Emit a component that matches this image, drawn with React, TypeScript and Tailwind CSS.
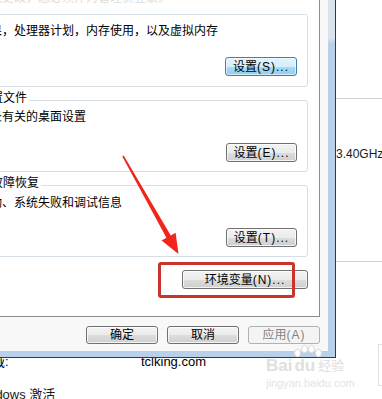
import React from 'react';

const normalBtn =
  'border-[#707070] bg-[linear-gradient(180deg,#f3f3f3_0%,#ebebeb_50%,#dddddd_51%,#cfcfcf_100%)] shadow-[inset_0_0_0_1px_rgba(255,255,255,0.75)] text-black';
const focusBtn =
  'border-[#3c7fb1] bg-[linear-gradient(180deg,#e3f4fc_0%,#d4eefb_50%,#a9dbf6_51%,#90cef0_100%)] shadow-[inset_0_0_0_1px_rgba(255,255,255,0.6)] text-black';
const disabledBtn = 'border-[#adb2b5] bg-[#f4f4f4] text-[#838383]';

function Button({ label, hotkey, className }: { label: string; hotkey: string; className: string }) {
  return (
    <div
      className={`flex shrink-0 items-center justify-center rounded-[3px] border text-[12px] leading-none ${className}`}
    >
      <span>{label}</span>
      <span className="tracking-[1px]">{hotkey}</span>
    </div>
  );
}

function Group({
  title,
  text,
  children,
  className,
  textClass,
}: {
  title: string;
  text: string;
  children: React.ReactNode;
  className: string;
  textClass: string;
}) {
  return (
    <div
      className={`-ml-[60px] flex w-[368px] shrink-0 flex-col rounded-[3px] border border-[#d5dfe5] ${className}`}
    >
      <div className="-mt-[10px] ml-[12px] w-fit bg-white px-[2px] text-[12px] leading-[14px] text-black">
        {title}
      </div>
      <div className={`pl-[13px] text-[12px] leading-[16px] whitespace-nowrap text-black ${textClass}`}>{text}</div>
      <div className="mt-[18px] flex justify-end pr-[10px]">{children}</div>
    </div>
  );
}

export default function App() {
  return (
    <div className="relative h-[399px] w-[382px] overflow-hidden bg-white font-['Liberation_Sans','Noto_Sans_CJK_SC',sans-serif]">
      {/* system page behind the dialog */}
      <div className="flex flex-col">
        <div className="ml-[336px] pt-[98px]">
          <div className="h-[163px] border-t border-[#d4d4d4] pt-[48px] text-[12px] leading-[14px] whitespace-nowrap text-[#1a1a1a]">
            3.40GHz
          </div>
          <div className="h-[93px] border-t border-[#d4d4d4]" />
        </div>
        <div className="flex h-[15px] text-[13px] leading-[15px] whitespace-nowrap text-black">
          <span className="-ml-[8px] w-[149px]">域:</span>
          <span>tclking.com</span>
        </div>
        <div className="mt-[18px] -ml-[27px] text-[13px] leading-[15px] whitespace-nowrap text-[#1a1a1a]">
          Windows 激活
        </div>
      </div>

      {/* dialog window */}
      <div className="absolute left-0 top-0 h-[358px] w-[336px] border-r border-b border-[#2d3a48] bg-[linear-gradient(180deg,#d9e3ec_0px,#d9e3ec_38px,#b8d0e9_44px,#b8d0e9_100%)]">
        <div className="flex h-[351px] w-[328px] flex-col bg-[#f8f8f8]">
          <div className="flex h-[317px] w-[320px] shrink-0 flex-col border-r border-b border-[#898c95] bg-white">
            <div className="h-[14px] shrink-0 overflow-hidden">
              <div className="-mt-[8px] -ml-[70px] text-[12px] leading-[12px] whitespace-nowrap text-[#dddddd]">
                要进行大多数更改，您必须作为管理员登录。
              </div>
            </div>

            <Group
              title="性能"
              text="视觉效果，处理器计划，内存使用，以及虚拟内存"
              className="h-[73px]"
              textClass="mt-[4px]"
            >
              <Button label="设置" hotkey="(S)..." className={`h-[19px] w-[72px] ${focusBtn}`} />
            </Group>

            <Group
              title="用户配置文件"
              text="与您登录有关的桌面设置"
              className="mt-[13px] h-[72px]"
              textClass="mt-[4px]"
            >
              <Button label="设置" hotkey="(E)..." className={`h-[19px] w-[71px] ${normalBtn}`} />
            </Group>

            <Group
              title="启动和故障恢复"
              text="系统启动、系统失败和调试信息"
              className="mt-[13px] h-[72px]"
              textClass="mt-[5px]"
            >
              <Button label="设置" hotkey="(T)..." className={`-mt-[1px] h-[19px] w-[71px] ${normalBtn}`} />
            </Group>

            <div className="mt-[13px] flex justify-end pr-[11px]">
              <Button label="环境变量" hotkey="(N)..." className={`h-[19px] w-[126px] ${normalBtn}`} />
            </div>
          </div>

          <div className="mt-[9px] flex justify-end gap-[9px] pr-[8px]">
            <Button label="确定" hotkey="" className={`h-[18px] w-[72px] ${normalBtn}`} />
            <Button label="取消" hotkey="" className={`h-[18px] w-[72px] ${normalBtn}`} />
            <Button label="应用" hotkey="(A)" className={`h-[18px] w-[72px] ${disabledBtn}`} />
          </div>
        </div>
      </div>

      {/* red highlight box */}
      <div className="pointer-events-none absolute left-[158px] top-[262px] h-[36px] w-[137px] rounded-[3px] border-[3px] border-[#c9342d]" />

      {/* red arrow */}
      <svg
        className="pointer-events-none absolute left-0 top-0"
        width="382"
        height="399"
        viewBox="0 0 382 399"
      >
        <polygon
          points="123.7,155.6 170.8,235.4 175.6,232.7 178.5,254 161.6,240.5 166.4,237.8 122.3,156.4"
          fill="#f0261c"
        />
      </svg>

      {/* baidu watermark */}
      <div className="pointer-events-none absolute left-[266px] top-[344px] w-[92px] text-[#e0e0e0]">
        <svg className="ml-[28px]" width="28" height="14" viewBox="0 0 28 14">
          <ellipse cx="3.5" cy="9" rx="3" ry="3.8" fill="#ffffff" stroke="#dadada" />
          <ellipse cx="10.5" cy="5" rx="3" ry="3.8" fill="#ffffff" stroke="#dadada" />
          <ellipse cx="17.5" cy="5" rx="3" ry="3.8" fill="#ffffff" stroke="#dadada" />
          <ellipse cx="24.5" cy="9" rx="3" ry="3.8" fill="#ffffff" stroke="#dadada" />
        </svg>
        <div className="flex h-[16px] items-end leading-[16px] whitespace-nowrap">
          <span className="text-[17px] font-bold">Bai</span>
          <span className="ml-[2px] text-[17px] font-bold">du</span>
          <span className="ml-[3px] text-[13px]">经验</span>
        </div>
        <div className="mt-[4px] text-[11px] leading-[11px] whitespace-nowrap text-[#e4e4e4]">jingyan.baidu.com</div>
      </div>
      <div className="pointer-events-none absolute left-[378px] top-[344px] h-[42px] w-[12px] border border-[#e2e2e2]" />
    </div>
  );
}
